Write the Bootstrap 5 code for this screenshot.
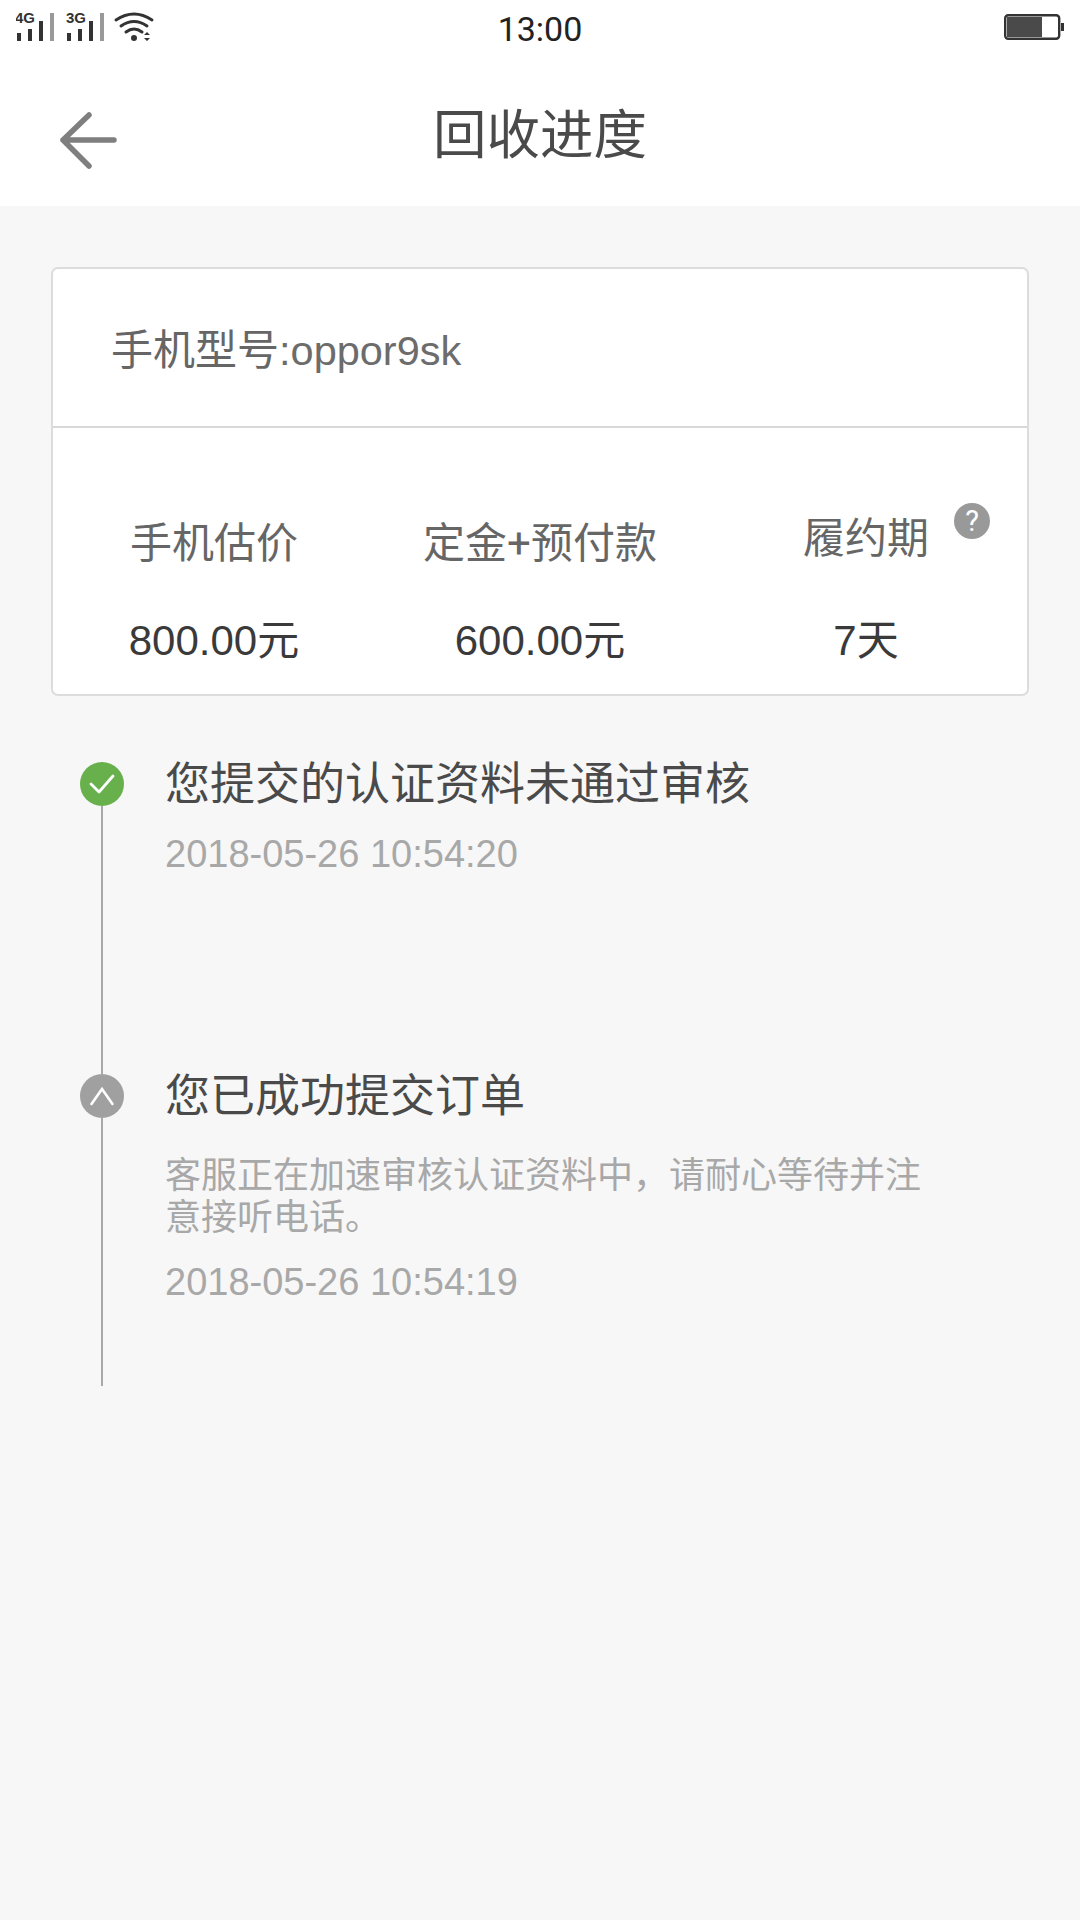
<!DOCTYPE html>
<html lang="zh"><head><meta charset="utf-8">
<title>回收进度</title>
<link rel="stylesheet" href="https://cdn.jsdelivr.net/npm/bootstrap@5.3.0/dist/css/bootstrap.min.css">
<style>
html,body{margin:0;width:1080px;height:1920px;overflow:hidden;background:#f7f7f7;font-family:Roboto,"Noto Sans CJK SC",sans-serif}
.top-area{background:#fff;height:206px}
.status-row{height:56px;padding:0 16px}
.clock{position:absolute;left:0;right:0;top:8px;text-align:center;font-size:34px;line-height:42px;color:#222}
.batt-ico{position:absolute;left:1004px;top:13px}
.nav-row{height:150px;position:relative}
.back-ico{position:absolute;left:58px;top:52px}
.page-title{font-size:53.5px;line-height:70px;color:#4a4a4a;margin:0;font-weight:400;padding-top:45px;text-align:center}
.info-card{margin:61px 51px 0;height:429px;border:2px solid #dcdcdc;border-radius:7px;background:#fff}
.model-row{height:159px;border-bottom:2px solid #d8d8d8;padding:7px 0 0 58px;font-size:42px;color:#666}
.latin{font-family:"Liberation Sans","Noto Sans CJK SC",sans-serif}
.model-row .latin{font-size:41.5px;color:#6c6c6c}
.price-row{height:266px;position:relative;padding-top:88px}
.price-col{width:326px;text-align:center}
.price-col.side{width:322px}
.price-col.mid{width:330px}
.p-label{font-size:42px;line-height:56px;color:#666;height:56px}
.p-label.up{margin-top:-5px;height:61px}
.p-value{font-size:42px;line-height:56px;color:#3a3a3a;margin-top:41px}
.help-dot{position:absolute;left:954px;top:503px;width:36px;height:36px;border-radius:50%;background:#999;color:#fff;font-size:29px;line-height:36px;text-align:center;font-weight:400}
.track{padding:66px 0 0 80px}
.tl-item{height:312px;gap:41px}
.rail{width:44px;flex:none}
.dot{width:44px;height:44px;border-radius:50%;flex:none}
.dot-ok{background:#68b04c}
.dot-wait{background:#a0a0a0}
.rail-line{width:2px;flex:1;background:#a8a8a8}
.tl-body{width:770px}
.tl-title{font-size:45px;line-height:46px;color:#4a4a4a;margin:0;font-weight:400}
.tl-desc{font-size:36px;line-height:42px;color:#a8a8a8;margin:35px 0 0}
.tl-date{font-family:"Liberation Sans",sans-serif;font-size:38px;line-height:42px;color:#a8a8a8;margin:25px 0 0}
.tl-desc + .tl-date{margin-top:22px}
</style></head><body>
<div class="top-area position-relative">
  <div class="status-row d-flex align-items-start">
    <svg width="140" height="44" viewBox="0 0 140 44"><g fill="#333"><text x="-1" y="23" font-family="Liberation Sans" font-weight="700" font-size="15">4G</text><rect x="1" y="33" width="4" height="8"/><rect x="12" y="29" width="4" height="12"/><rect x="23" y="21" width="4" height="20"/><rect x="34" y="13" width="4" height="28" fill="#999"/><text x="50" y="23" font-family="Liberation Sans" font-weight="700" font-size="15">3G</text><rect x="51" y="33" width="4" height="8"/><rect x="62" y="29" width="4" height="12"/><rect x="73" y="21" width="4" height="20"/><rect x="84" y="13" width="4" height="28" fill="#999"/></g><g fill="none" stroke="#333" stroke-width="3" stroke-linecap="round"><path d="M100 20Q118 8 136 20"/><path d="M105 26Q118 17 131 26"/><path d="M110 32Q118 26 126 32"/></g><circle cx="118" cy="38" r="3" fill="#333"/><path d="M128 35l3-3 3 3zM128 38l3 3 3-3z" fill="#333"/></svg>
  </div>
  <div class="clock">13:00</div>
  <svg class="batt-ico" width="62" height="28" viewBox="0 0 62 28"><rect x="1.2" y="2.2" width="54" height="23.6" rx="3" fill="none" stroke="#333" stroke-width="2.4"/><rect x="3" y="4" width="35" height="20" fill="#4a4a4a"/><rect x="57" y="10" width="3" height="8" fill="#333"/></svg>
  <div class="nav-row">
    <svg class="back-ico" width="64" height="64" viewBox="0 0 64 64" fill="none" stroke="#7f7f7f" stroke-width="5.5" stroke-linecap="round" stroke-linejoin="round"><path d="M31 7L5 32 31 58M5 32H56"/></svg>
    <h1 class="page-title">回收进度</h1>
  </div>
</div>
<div class="info-card">
  <div class="model-row d-flex align-items-center"><span>手机型号<span class="latin">:oppor9sk</span></span></div>
  <div class="price-row d-flex">
    <div class="price-col side"><div class="p-label">手机估价</div><div class="p-value"><span class="latin">800.00</span>元</div></div>
    <div class="price-col mid"><div class="p-label">定金+预付款</div><div class="p-value"><span class="latin">600.00</span>元</div></div>
    <div class="price-col side"><div class="p-label up">履约期</div><div class="p-value"><span class="latin">7</span>天</div></div>
  </div>
</div>
<div class="track">
  <div class="tl-item d-flex">
    <div class="rail d-flex flex-column align-items-center">
      <div class="dot dot-ok d-flex align-items-center justify-content-center"><svg width="26" height="20" viewBox="0 0 26 20" fill="none" stroke="#fff" stroke-width="2.8" stroke-linecap="round" stroke-linejoin="round"><path d="M2 10l8 8L24 2"/></svg></div>
      <div class="rail-line"></div>
    </div>
    <div class="tl-body">
      <h2 class="tl-title">您提交的认证资料未通过审核</h2>
      <p class="tl-date">2018-05-26 10:54:20</p>
    </div>
  </div>
  <div class="tl-item d-flex">
    <div class="rail d-flex flex-column align-items-center">
      <div class="dot dot-wait d-flex align-items-center justify-content-center"><svg width="26" height="20" viewBox="0 0 26 20" fill="none" stroke="#fff" stroke-width="2.6" stroke-linecap="round" stroke-linejoin="miter"><path d="M2.5 18L13 3l10.5 15"/></svg></div>
      <div class="rail-line"></div>
    </div>
    <div class="tl-body">
      <h2 class="tl-title">您已成功提交订单</h2>
      <p class="tl-desc">客服正在加速审核认证资料中&#xFF0C;请耐心等待并注意接听电话&#x3002;</p>
      <p class="tl-date">2018-05-26 10:54:19</p>
    </div>
  </div>
</div>
<div class="help-dot">?</div>
<script src="https://cdn.jsdelivr.net/npm/bootstrap@5.3.0/dist/js/bootstrap.bundle.min.js"></script>
</body></html>
